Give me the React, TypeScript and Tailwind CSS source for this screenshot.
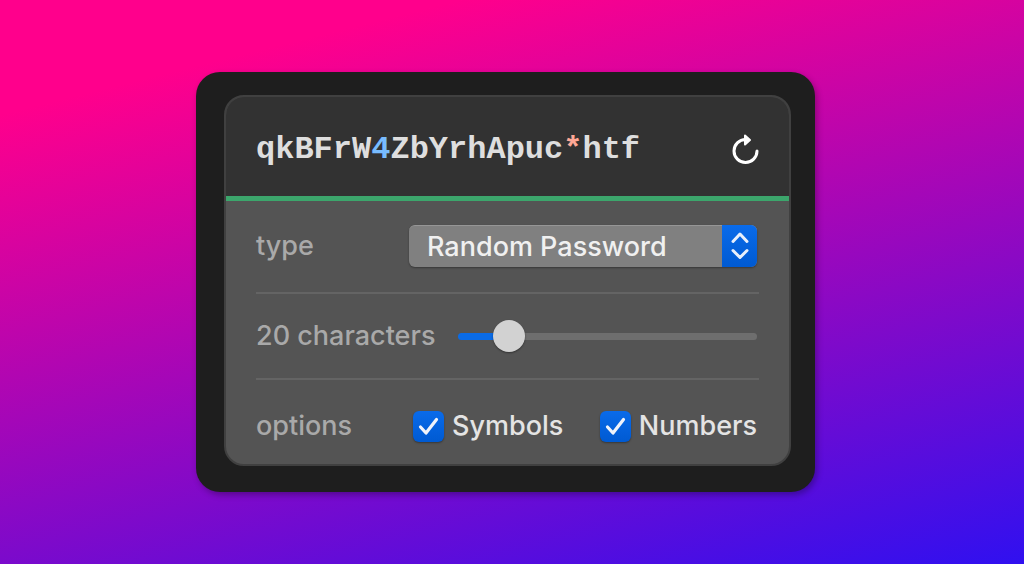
import { useState } from "react";

const LETTERS = "abcdefghijkmnopqrstuvwxyzABCDEFGHJKLMNPQRSTUVWXYZ";
const DIGITS = "23456789";
const SYMBOLS = "*!-_@.";
const MIN = 8;
const MAX = 100;

function generate(length: number, symbols: boolean, numbers: boolean) {
  const pool = LETTERS + (symbols ? SYMBOLS : "") + (numbers ? DIGITS : "");
  return Array.from({ length }, () => pool[Math.floor(Math.random() * pool.length)]).join("");
}

function Password({ value }: { value: string }) {
  const parts = value.match(/[a-zA-Z]+|[0-9]+|[^a-zA-Z0-9]+/g) ?? [];
  return (
    <output className="min-w-0 overflow-hidden whitespace-nowrap font-['Courier','Liberation_Mono',monospace] text-[32px] leading-10 font-bold text-[#dedede]">
      {parts.map((part, i) => (
        <span
          key={i}
          className={/[0-9]/.test(part) ? "text-[#78bcff]" : /[a-zA-Z]/.test(part) ? "" : "text-[#ffa896]"}
        >
          {part}
        </span>
      ))}
    </output>
  );
}

type OptionProps = { id: string; label: string; checked: boolean; onChange: (value: boolean) => void };

function Option({ id, label, checked, onChange }: OptionProps) {
  return (
    <div className="flex items-center gap-2">
      <span className="relative flex">
        <input
          id={id}
          type="checkbox"
          checked={checked}
          onChange={(e) => onChange(e.target.checked)}
          className="size-[31px] appearance-none rounded-[6px] bg-[#808080] shadow-[0_1px_2px_rgba(0,0,0,0.35)] checked:bg-linear-to-b checked:from-[#0a6bea] checked:to-[#005ad2]"
        />
        {checked && (
          <svg
            viewBox="0 0 31 31"
            aria-hidden="true"
            className="pointer-events-none absolute inset-0 size-full"
            fill="none"
            stroke="#f0f3fa"
            strokeWidth="3.2"
            strokeLinecap="round"
            strokeLinejoin="round"
          >
            <path d="M7.5 16 13 22 23.5 8.5" />
          </svg>
        )}
      </span>
      <label htmlFor={id} className="text-[#e4e4e4]">
        {label}
      </label>
    </div>
  );
}

export default function App() {
  const [length, setLength] = useState(20);
  const [symbols, setSymbols] = useState(true);
  const [numbers, setNumbers] = useState(true);
  const [password, setPassword] = useState("qkBFrW4ZbYrhApuc*htf");
  const ratio = (length - MIN) / (MAX - MIN);

  return (
    <main className="flex min-h-screen items-center justify-center bg-[linear-gradient(166deg,#ff008c_14%,#3010f0_100%)] pr-[13px] font-['Inter','Liberation_Sans',sans-serif] text-[27px] leading-9 font-medium">
      <section className="w-full max-w-[619px] rounded-3xl bg-[#1e1e1e] pt-[23px] pr-6 pb-[26px] pl-7 shadow-[2px_3px_6px_rgba(0,0,0,0.3)]">
        <div className="overflow-hidden rounded-[20px] border-2 border-[#404040] bg-[#545454]">
          <header className="flex items-center justify-between bg-[#323232] px-[30px] pt-[33px] pb-[26px]">
            <Password value={password} />
            <button
              type="button"
              aria-label="Generate a new password"
              onClick={() => setPassword(generate(length, symbols, numbers))}
              className="shrink-0 text-white"
            >
              <svg viewBox="0 0 28 32" className="h-8 w-7" fill="none" stroke="currentColor" aria-hidden="true">
                <path d="M26 17A11.5 11.5 0 1 1 14.5 5.5H16" strokeWidth="3" strokeLinecap="round" />
                <path d="M14 1.5 19 6 14 10.5Z" fill="currentColor" strokeWidth="2" strokeLinejoin="round" />
              </svg>
            </button>
          </header>
          <div className="h-[5px] bg-[#3ca66c]" />
          <div className="flex flex-col px-[30px] text-[#a9a9a9]">
            <div className="flex items-center justify-between pt-6 pr-0.5 pb-[25px]">
              <label htmlFor="type">type</label>
              <div className="relative flex w-[348px]">
                <select
                  id="type"
                  className="h-[42px] w-full appearance-none rounded-md border-t border-[#969696] bg-[#808080] pl-[18px] text-[#f0f0f0] shadow-[0_1px_2px_rgba(0,0,0,0.35)]"
                >
                  <option>Random Password</option>
                  <option>Memorable Password</option>
                  <option>PIN Code</option>
                </select>
                <span className="pointer-events-none absolute inset-y-0 right-0 flex w-[35px] items-center justify-center rounded-r-md bg-linear-to-b from-[#0a6bea] to-[#005ad2]">
                  <svg
                    viewBox="0 0 18 28"
                    className="h-7 w-[18px]"
                    fill="none"
                    stroke="#e8effb"
                    strokeWidth="3"
                    strokeLinecap="round"
                    strokeLinejoin="round"
                    aria-hidden="true"
                  >
                    <path d="M2 9.5 9 2 16 9.5M2 18.5 9 25.5 16 18.5" />
                  </svg>
                </span>
              </div>
            </div>
            <hr className="border-t-2 border-[#646464]" />
            <div className="flex items-center justify-between py-6 pr-0.5">
              <label htmlFor="length">{length} characters</label>
              <input
                id="length"
                type="range"
                min={MIN}
                max={MAX}
                value={length}
                onChange={(e) => {
                  const next = Number(e.target.value);
                  setLength(next);
                  setPassword(generate(next, symbols, numbers));
                }}
                style={{
                  backgroundImage: `linear-gradient(to right, #0a6be6 ${ratio * 100}%, #6e6e6e ${ratio * 100}%)`,
                }}
                className="h-[7px] w-[299px] appearance-none rounded-full [&::-webkit-slider-thumb]:size-8 [&::-webkit-slider-thumb]:appearance-none [&::-webkit-slider-thumb]:rounded-full [&::-webkit-slider-thumb]:bg-[#d2d2d2] [&::-webkit-slider-thumb]:shadow-[0_1px_2px_rgba(0,0,0,0.4)]"
              />
            </div>
            <hr className="border-t-2 border-[#646464]" />
            <fieldset
              aria-labelledby="options-label"
              className="flex items-center justify-between pt-7 pr-0.5 pb-5"
            >
              <span id="options-label">options</span>
              <div className="flex w-[344px] justify-between">
                <Option id="symbols" label="Symbols" checked={symbols} onChange={setSymbols} />
                <Option id="numbers" label="Numbers" checked={numbers} onChange={setNumbers} />
              </div>
            </fieldset>
          </div>
        </div>
      </section>
    </main>
  );
}
